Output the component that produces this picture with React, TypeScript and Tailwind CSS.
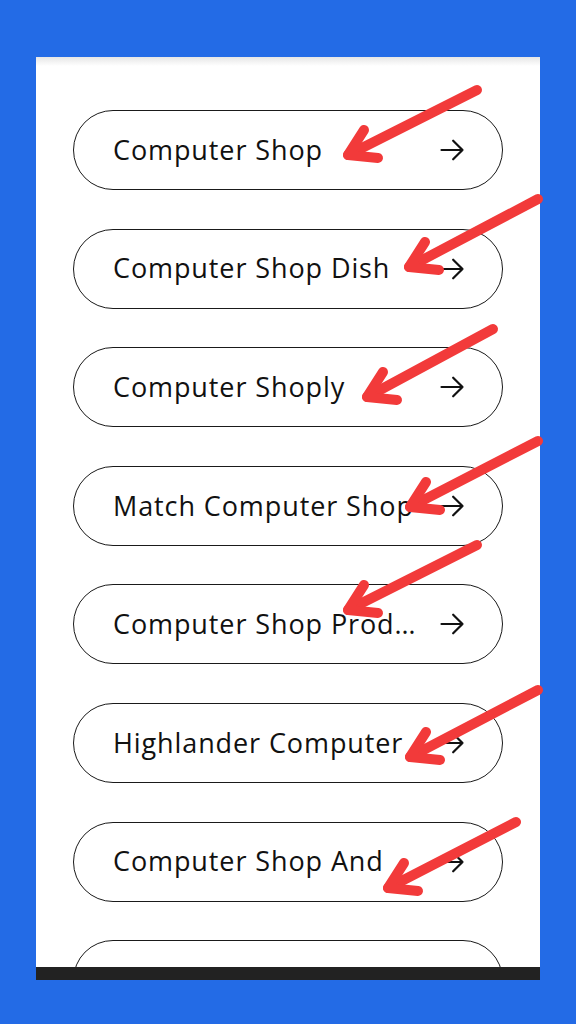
import React from 'react';

const ITEMS = [
  'Computer Shop',
  'Computer Shop Dish',
  'Computer Shoply',
  'Match Computer Shop',
  'Computer Shop Prod…',
  'Highlander Computer',
  'Computer Shop And',
  '',
];

// tail -> tip for each red pointer
const POINTERS = [
  { tail: [477, 90], tip: [348, 155] },
  { tail: [538, 199], tip: [409, 267] },
  { tail: [493, 329], tip: [367, 397] },
  { tail: [538, 441], tip: [410, 507] },
  { tail: [477, 545], tip: [348, 610] },
  { tail: [538, 690], tip: [410, 757] },
  { tail: [516, 822], tip: [388, 888] },
];

function RedPointers() {
  return (
    <svg className="absolute inset-0 pointer-events-none" width={576} height={1024} viewBox="0 0 576 1024">
      {POINTERS.map((p, i) => {
        const [tx, ty] = p.tip;
        const [sx, sy] = p.tail;
        return (
          <g key={i} stroke="#f23a3a" strokeWidth={10} strokeLinecap="round" strokeLinejoin="round" fill="none">
            <path d={`M${sx} ${sy} L${tx} ${ty}`} />
            <path d={`M${tx + 16} ${ty - 25} L${tx} ${ty} L${tx + 30} ${ty + 3}`} />
          </g>
        );
      })}
    </svg>
  );
}

function ResultPill({ label }: { label: string }) {
  return (
    <div className="flex items-center shrink-0 h-[80px] mx-[37px] rounded-full border border-[#1a1a1a] pl-[39px] pr-[36px]">
      <span className="flex-1 min-w-0 whitespace-nowrap text-[27px] text-[#111] tracking-[0.9px]">{label}</span>
      <svg className="ml-[16px] shrink-0" width={28} height={28} viewBox="0 0 24 24" fill="none" stroke="#111" strokeWidth={1.9} strokeLinecap="round" strokeLinejoin="round">
        <path d="M3 12h18M13 4l8 8-8 8" />
      </svg>
    </div>
  );
}

export default function App() {
  return (
    <div className="relative w-[576px] h-[1024px] bg-[#236be6] overflow-hidden" style={{ fontFamily: '"Open Sans", sans-serif' }}>
      <div className="absolute left-[36px] top-[57px] w-[504px] h-[923px] flex flex-col bg-white">
        <div className="h-[9px] shrink-0 bg-gradient-to-b from-[#e6e6e6] to-white" />
        <div className="flex-1 min-h-0 overflow-hidden flex flex-col gap-[38.6px] pt-[44px]">
          {ITEMS.map((label, i) => (
            <ResultPill key={i} label={label} />
          ))}
        </div>
        <div className="h-[13px] shrink-0 bg-[#222]" />
      </div>
      <RedPointers />
    </div>
  );
}
